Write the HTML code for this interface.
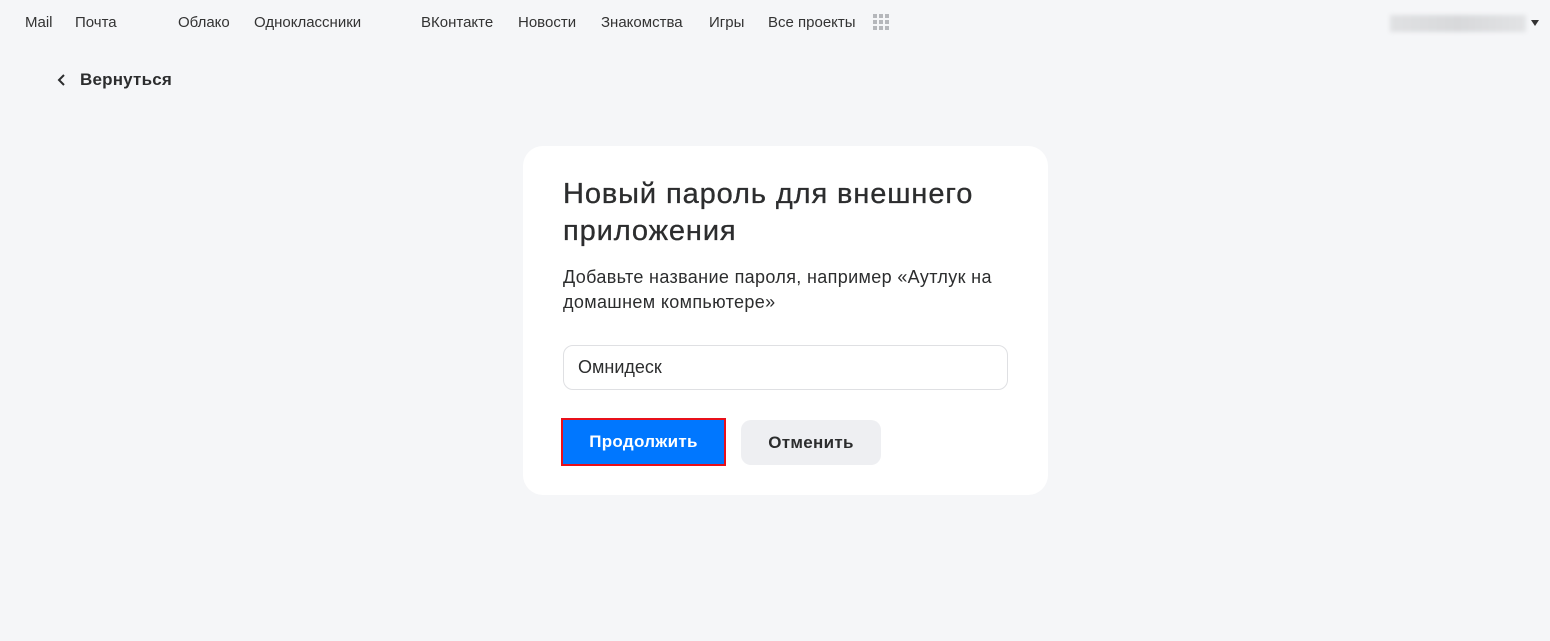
<!DOCTYPE html>
<html><head><meta charset="utf-8"><style>
*{margin:0;padding:0;box-sizing:border-box}
body{width:1550px;height:641px;background:#f5f6f8;font-family:"Liberation Sans",sans-serif;color:#2c2d2e;position:relative;overflow:hidden}
.nav{position:absolute;top:14px;font-size:15px;color:#333;white-space:nowrap}
.nav span{position:absolute;top:0}
.blur{position:absolute;left:1390px;top:15px;width:136px;height:17px;background:linear-gradient(90deg,#e0e1e3,#d8d9db,#e2e3e5);filter:blur(2px)}
.tri{position:absolute;left:1531px;top:20px;width:0;height:0;border-left:4px solid transparent;border-right:4px solid transparent;border-top:6px solid #333}
.back{position:absolute;left:80px;top:70px;font-size:17px;font-weight:bold;color:#2c2d2e;letter-spacing:0.2px}
.card{position:absolute;left:523px;top:146px;width:525px;height:349px;background:#fff;border-radius:20px}
h1{position:absolute;left:40px;top:30px;font-size:29px;font-weight:normal;line-height:37px;color:#2c2d2e;width:480px;letter-spacing:0.9px;-webkit-text-stroke:0.3px #2c2d2e}
p{position:absolute;left:40px;top:119px;font-size:18px;line-height:25px;width:470px;color:#2c2d2e;letter-spacing:0.35px}
.inp{position:absolute;left:40px;top:199px;width:445px;height:45px;border:1px solid #dfe0e3;border-radius:10px;font-size:18px;padding:11px 14px}
.b1{position:absolute;left:38px;top:272px;width:165px;height:48px;border:2px solid #e8101a;background:#0077ff;color:#fff;font-weight:bold;font-size:17px;text-align:center;line-height:44px;letter-spacing:0.3px}
.b2{position:absolute;left:218px;top:274px;width:140px;height:45px;border-radius:10px;background:#eeeff2;font-weight:bold;font-size:17px;text-align:center;line-height:45px;color:#2c2d2e;letter-spacing:0.3px}
</style></head><body>
<div class="nav">
<span style="left:25px">Mail</span><span style="left:75px">Почта</span><span style="left:178px">Облако</span><span style="left:254px">Одноклассники</span><span style="left:421px">ВКонтакте</span><span style="left:518px">Новости</span><span style="left:601px">Знакомства</span><span style="left:709px">Игры</span><span style="left:768px">Все проекты</span>
</div>
<svg style="position:absolute;left:873px;top:14px" width="18" height="18"><g fill="#b5b7bb"><rect x="0" y="0" width="4" height="4"/><rect x="6" y="0" width="4" height="4"/><rect x="12" y="0" width="4" height="4"/><rect x="0" y="6" width="4" height="4"/><rect x="6" y="6" width="4" height="4"/><rect x="12" y="6" width="4" height="4"/><rect x="0" y="12" width="4" height="4"/><rect x="6" y="12" width="4" height="4"/><rect x="12" y="12" width="4" height="4"/></g></svg>
<div class="blur"></div><div class="tri"></div>
<svg style="position:absolute;left:56px;top:73px" width="12" height="14"><path d="M8 2 L3 7 L8 12" stroke="#2c2d2e" stroke-width="2" fill="none"/></svg>
<div class="back">Вернуться</div>
<div class="card">
<h1>Новый пароль для внешнего приложения</h1>
<p>Добавьте название пароля, например «Аутлук на домашнем компьютере»</p>
<div class="inp">Омнидеск</div>
<div class="b1">Продолжить</div>
<div class="b2">Отменить</div>
</div>
</body></html>
